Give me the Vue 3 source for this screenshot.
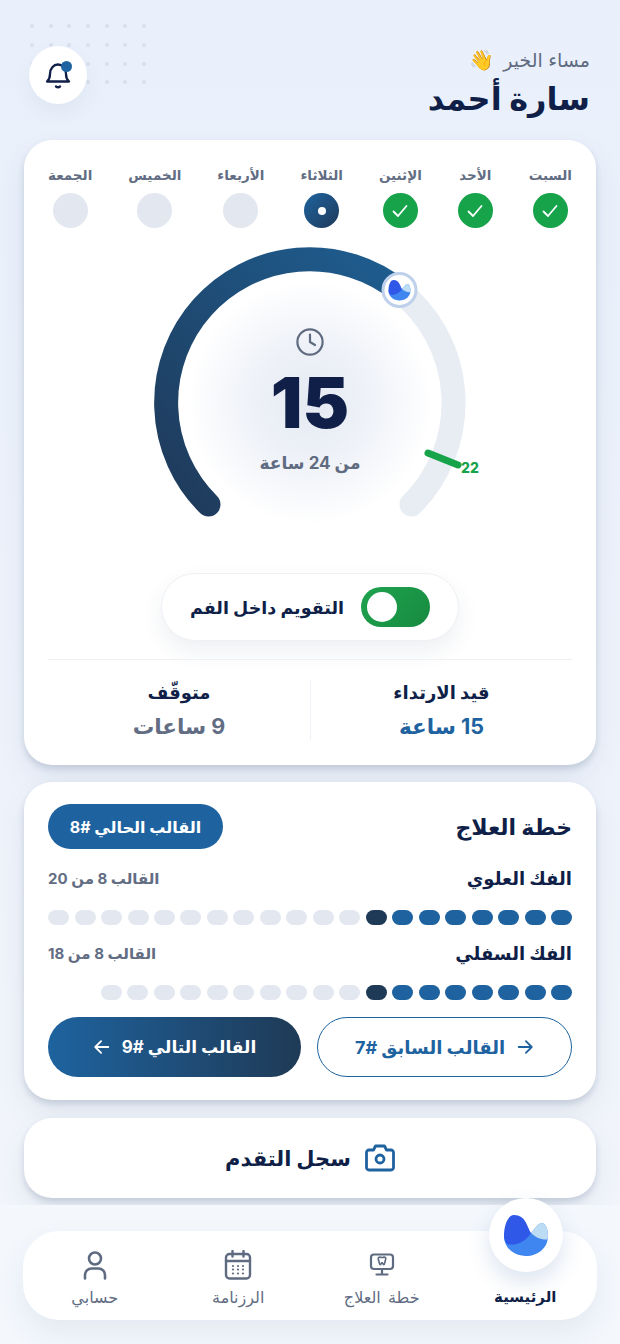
<script setup>
// Home screen of the aligner tracker
const days = [
  { name: 'السبت', state: 'done' },
  { name: 'الأحد', state: 'done' },
  { name: 'الإثنين', state: 'done' },
  { name: 'الثلاثاء', state: 'today' },
  { name: 'الأربعاء', state: 'todo' },
  { name: 'الخميس', state: 'todo' },
  { name: 'الجمعة', state: 'todo' },
]

const jaws = [
  { name: 'الفك العلوي', info: 'القالب 8 من 20', total: 20 },
  { name: 'الفك السفلي', info: 'القالب 8 من 18', total: 18 },
]

const dots = Array.from({ length: 28 })

function segClass(i) {
  if (i < 7) return 'seg done'
  if (i === 7) return 'seg current'
  return 'seg'
}

const logoPaths = [
  { d: 'M0 21C0 33 10 41 22 41C34 41 44 33 44 21C44 13 41 8 38 8C34 8 31 14 27 18L0 21Z', fill: '#3f86f0' },
  { d: 'M27 18C23 12 22 0 10 0C4 0 0 10 0 21C0 24 1.500 27 3 29C10 31 21 28 27 18Z', fill: '#2f57e8' },
  { d: 'M27 18C31 14 34 8 38 8C41 8 44 13 44 21C44 22.500 43.800 23.500 43.500 24.500C37 25 31 22 27 18Z', fill: '#bcdcf3' },
]
</script>

<template>
  <div class="page" dir="rtl">
    <div class="dots">
      <i v-for="(d, i) in dots" :key="i"></i>
    </div>

    <header class="head">
      <div class="hello">
        <div class="greet">مساء الخير<span class="wave">👋</span></div>
        <h1>سارة أحمد</h1>
      </div>
      <button class="bell">
        <svg width="26" height="28" viewBox="0 0 26 28" fill="none" stroke="#0f1f47" stroke-width="2.300" stroke-linecap="round" stroke-linejoin="round">
          <path d="M2 20.500c2-1.800 3-4 3-7.500 0-5.500 3.500-9.500 8-9.500s8 4 8 9.500c0 3.500 1 5.700 3 7.500z" />
          <path d="M11 25.500c1.300 1 2.700 1 4 0" />
        </svg>
        <span class="bell-dot"></span>
      </button>
    </header>

    <section class="card main">
      <div class="week">
        <div v-for="d in days" :key="d.name" class="day">
          <span class="day-name">{{ d.name }}</span>
          <span class="day-mark" :class="d.state">
            <svg v-if="d.state === 'done'" width="18" height="18" viewBox="0 0 18 18" fill="none" stroke="#fff" stroke-width="1.800" stroke-linecap="round" stroke-linejoin="round">
              <path d="M2.500 9.500l4.500 4.500 8.500-10" />
            </svg>
            <span v-if="d.state === 'today'" class="today-dot"></span>
          </span>
        </div>
      </div>

      <div class="gauge">
        <svg width="340" height="300" viewBox="0 0 340 300" fill="none">
          <defs>
            <radialGradient id="glow">
              <stop offset="0" stop-color="#e4e9f2" />
              <stop offset=".5" stop-color="#eff2f8" />
              <stop offset="1" stop-color="#fff" />
            </radialGradient>
            <linearGradient id="arc" gradientUnits="userSpaceOnUse" x1="30" y1="265" x2="260" y2="40">
              <stop offset="0" stop-color="#1f3a5a" />
              <stop offset="1" stop-color="#1e5c8e" />
            </linearGradient>
          </defs>
          <circle cx="170" cy="163" r="122" fill="url(#glow)" />
          <path d="M259.100 50.500A143.500 143.500 0 0 1 271.500 264.500" stroke="#e8ecf3" stroke-width="24" stroke-linecap="round" />
          <path d="M68.500 264.500A143.500 143.500 0 0 1 259.100 50.500" stroke="url(#arc)" stroke-width="24" stroke-linecap="round" />
          <path d="M288 213L318 225" stroke="#16a34a" stroke-width="7" stroke-linecap="round" />
          <text x="330" y="233" text-anchor="middle" class="tick">22</text>
          <circle cx="259.500" cy="50" r="16.500" fill="#fff" stroke="#bfd0ea" stroke-width="3" />
          <g transform="translate(248.500 40) scale(.5)">
            <path v-for="p in logoPaths" :key="p.fill" :d="p.d" :fill="p.fill" />
          </g>
        </svg>
        <div class="gauge-text">
          <svg width="30" height="30" viewBox="0 0 30 30" fill="none" stroke="#5f6b80" stroke-width="2.200" stroke-linecap="round" stroke-linejoin="round">
            <circle cx="15" cy="15" r="12.600" />
            <path d="M15 7.500V15l5 3" />
          </svg>
          <div class="hours">15</div>
          <div class="of">من 24 ساعة</div>
        </div>
      </div>

      <div class="toggle-pill">
        <span class="toggle"><span class="knob"></span></span>
        <span class="toggle-label">التقويم داخل الفم</span>
      </div>

      <div class="stats">
        <div class="stat">
          <div class="stat-label">قيد الارتداء</div>
          <div class="stat-value on">15 ساعة</div>
        </div>
        <div class="stat">
          <div class="stat-label">متوقّف</div>
          <div class="stat-value">9 ساعات</div>
        </div>
      </div>
    </section>

    <section class="card plan">
      <div class="plan-head">
        <h2>خطة العلاج</h2>
        <span class="badge">القالب الحالي #8</span>
      </div>

      <div v-for="j in jaws" :key="j.name" class="jaw">
        <div class="jaw-head">
          <span class="jaw-name">{{ j.name }}</span>
          <span class="jaw-info">{{ j.info }}</span>
        </div>
        <div class="segs">
          <span v-for="i in j.total" :key="i" :class="segClass(i - 1)"></span>
        </div>
      </div>

      <div class="actions">
        <button class="btn ghost">
          <svg width="18" height="18" viewBox="0 0 20 20" fill="none" stroke="currentColor" stroke-width="2" stroke-linecap="round" stroke-linejoin="round">
            <path d="M3 10h14M11 3.500l6.500 6.500-6.500 6.500" />
          </svg>
          <span>القالب السابق #7</span>
        </button>
        <button class="btn solid">
          <span>القالب التالي #9</span>
          <svg width="18" height="18" viewBox="0 0 20 20" fill="none" stroke="currentColor" stroke-width="2" stroke-linecap="round" stroke-linejoin="round">
            <path d="M17 10H3M9 3.500L2.500 10 9 16.500" />
          </svg>
        </button>
      </div>
    </section>

    <section class="card log">
      <svg width="30" height="28" viewBox="0 0 30 28" fill="none" stroke="#1e639f" stroke-width="2.800" stroke-linecap="round" stroke-linejoin="round">
        <path d="M4 6h4.500l2-4h9l2 4H26a2.500 2.500 0 0 1 2.500 2.500v15A2.500 2.500 0 0 1 26 26H4a2.500 2.500 0 0 1-2.500-2.500v-15A2.500 2.500 0 0 1 4 6z" />
        <circle cx="15" cy="15" r="4" />
      </svg>
      <span>سجل التقدم</span>
    </section>

    <footer class="foot">
      <nav class="nav">
        <a class="tab active">
          <span class="home-logo">
            <svg width="44" height="41" viewBox="0 0 44 41">
              <path v-for="p in logoPaths" :key="p.fill" :d="p.d" :fill="p.fill" />
            </svg>
          </span>
          <span class="tab-label">الرئيسية</span>
        </a>
        <a class="tab">
          <svg class="screen" width="26" height="23" viewBox="0 0 26 23" fill="none" stroke="#5f6b80" stroke-width="2.200" stroke-linecap="round" stroke-linejoin="round">
            <rect x="2" y="1.500" width="22" height="14.500" rx="3" />
            <path d="M13 16v5M7.500 21.500h11" />
            <path d="M9.500 4.500c1.300-.7 2.500 0 3.500 0s2.200-.7 3.500 0c.7 1.300 0 3-.5 4.200-.3 1-.4 3-1.300 3s-.9-2.200-1.700-2.200-.8 2.200-1.700 2.200-1-2-1.300-3c-.5-1.200-1.200-2.900-.5-4.200z" stroke-width="1.700" />
          </svg>
          <span class="tab-label">خطة العلاج</span>
        </a>
        <a class="tab">
          <svg width="28" height="30" viewBox="0 0 28 30" fill="none" stroke="#5f6b80" stroke-width="2.400" stroke-linecap="round" stroke-linejoin="round">
            <rect x="2" y="4" width="24" height="24.500" rx="3.500" />
            <path d="M2 11h24M8.500 1v5.500M19.500 1v5.500" />
            <g fill="#5f6b80" stroke="none">
              <circle cx="9" cy="16" r="1.100" /><circle cx="14" cy="16" r="1.100" /><circle cx="19" cy="16" r="1.100" />
              <circle cx="9" cy="19.500" r="1.100" /><circle cx="14" cy="19.500" r="1.100" /><circle cx="19" cy="19.500" r="1.100" />
              <circle cx="9" cy="23.500" r="1.100" /><circle cx="14" cy="23.500" r="1.100" /><circle cx="19" cy="23.500" r="1.100" />
            </g>
          </svg>
          <span class="tab-label">الرزنامة</span>
        </a>
        <a class="tab">
          <svg width="24" height="29" viewBox="0 0 24 29" fill="none" stroke="#5f6b80" stroke-width="2.600" stroke-linecap="round" stroke-linejoin="round">
            <circle cx="12" cy="7.500" r="6" />
            <path d="M2 27.500v-3.500a6.500 6.500 0 0 1 6.500-6.500h7a6.500 6.500 0 0 1 6.500 6.500v3.500" />
          </svg>
          <span class="tab-label">حسابي</span>
        </a>
      </nav>
    </footer>
  </div>
</template>

<style>
html, body { margin: 0; background: #f4f8fd; }
</style>

<style scoped>
.page {
  position: relative;
  width: 620px;
  height: 1344px;
  overflow: hidden;
  background: linear-gradient(180deg, #e9f0fb 0%, #eef3fb 60%, #f3f6fb 100%);
  font-family: "Inter", "DejaVu Sans", sans-serif;
  color: #0f1f47;
}

.dots {
  position: absolute;
  left: 30px;
  top: 24px;
  display: grid;
  grid-template-columns: repeat(7, 5px);
  grid-auto-rows: 5px;
  column-gap: 13.700px;
  row-gap: 13.800px;
  direction: ltr;
}
.dots i {
  display: block;
  width: 4px;
  height: 4px;
  border-radius: 50%;
  background: #d8e0ec;
}

.head {
  position: relative;
  height: 140px;
  padding: 0 30px 0 29px;
  display: flex;
  justify-content: space-between;
  box-sizing: border-box;
}
.hello { padding-top: 47px; }
.greet { font-size: 19px; line-height: 26px; color: #5f6b80; }
.wave { margin-right: 9px; font-size: 20px; }
h1 { margin: 4px 0 0; font-size: 32px; line-height: 42px; font-weight: 700; }
.bell {
  position: relative;
  margin-top: 46px;
  width: 58px;
  height: 58px;
  padding: 0;
  border: 0;
  border-radius: 50%;
  background: #fff;
  box-shadow: 0 8px 20px rgba(40, 60, 100, 0.06);
  display: flex;
  align-items: center;
  justify-content: center;
}
.bell-dot {
  position: absolute;
  left: 32px;
  top: 15px;
  width: 11px;
  height: 11px;
  border-radius: 50%;
  background: #1e639f;
}

.card {
  position: relative;
  margin: 0 24px;
  background: #fff;
  border-radius: 28px;
  box-shadow: 0 4px 6px rgba(40, 60, 100, 0.16), 0 14px 30px rgba(40, 60, 100, 0.08);
}

.main { height: 625px; padding: 26px 24px 0; box-sizing: border-box; }
.week { display: flex; justify-content: space-between; }
.day { display: flex; flex-direction: column; align-items: center; gap: 9px; }
.day-name { font-size: 13.500px; line-height: 18px; font-weight: 700; color: #626d83; white-space: nowrap; }
.day-mark {
  width: 35px;
  height: 35px;
  border-radius: 50%;
  background: #e3e7ef;
  display: flex;
  align-items: center;
  justify-content: center;
}
.day-mark.done { background: #16a34a; }
.day-mark.today { background: linear-gradient(135deg, #1e639f, #1f3a5a); }
.today-dot { width: 8px; height: 8px; border-radius: 50%; background: #fff; }

.gauge { position: relative; width: 340px; height: 300px; margin: 12px auto 0; }
.gauge > svg { display: block; }
.tick { font-size: 14px; font-weight: 800; fill: #16a34a; }
.gauge-text {
  position: absolute;
  top: 87px;
  left: 0;
  right: 0;
  display: flex;
  flex-direction: column;
  align-items: center;
}
.hours { margin-top: 6px; font-size: 70px; line-height: 80px; font-weight: 900; }
.of { margin-top: 8px; font-size: 17px; line-height: 24px; font-weight: 700; color: #5f6b80; }

.toggle-pill {
  width: 298px;
  height: 68px;
  margin: 33px auto 0;
  box-sizing: border-box;
  padding: 0 28px;
  border: 1px solid #eef0f4;
  border-radius: 34px;
  background: #fff;
  box-shadow: 0 10px 22px rgba(40, 60, 100, 0.08);
  display: flex;
  align-items: center;
  justify-content: space-between;
}
.toggle-label { font-size: 17.500px; font-weight: 700; }
.toggle {
  position: relative;
  width: 69px;
  height: 40px;
  border-radius: 20px;
  background: linear-gradient(135deg, #1ea34f, #178a3f);
}
.knob {
  position: absolute;
  left: 6px;
  top: 5px;
  width: 30px;
  height: 30px;
  border-radius: 50%;
  background: #fff;
}

.stats {
  margin-top: 18px;
  border-top: 1px solid #eef1f5;
  padding-top: 20px;
  display: grid;
  grid-template-columns: 1fr 1fr;
}
.stat { height: 60px; text-align: center; }
.stat:first-child { border-left: 1px solid #eef1f5; }
.stat-label { font-size: 18px; line-height: 26px; font-weight: 700; }
.stat-value { margin-top: 6px; font-size: 21.500px; line-height: 28px; font-weight: 700; color: #626d83; }
.stat-value.on { color: #1e639f; }

.plan { height: 318px; margin-top: 17px; padding: 22px 24px 0; box-sizing: border-box; }
.plan-head { display: flex; justify-content: space-between; align-items: center; }
h2 { margin: 0; font-size: 22px; font-weight: 700; }
.badge {
  width: 175px;
  height: 45px;
  border-radius: 23px;
  background: #1e639f;
  color: #fff;
  font-size: 16px;
  font-weight: 700;
  display: flex;
  align-items: center;
  justify-content: center;
}
.jaw { margin-top: 14px; }
.jaw + .jaw { margin-top: 13px; }
.jaw-head { display: flex; justify-content: space-between; align-items: center; height: 30px; }
.jaw-name { font-size: 18px; font-weight: 700; }
.jaw-info { font-size: 15px; font-weight: 700; color: #626d83; }
.segs { display: flex; gap: 5.500px; margin-top: 17px; }
.seg { width: 21px; height: 15px; border-radius: 8px; background: #e3e7ef; }
.seg.done { background: #1e639f; }
.seg.current { background: #1f3a56; }

.actions { display: grid; grid-template-columns: 255px 253px; justify-content: space-between; margin-top: 17px; }
.btn {
  height: 60px;
  border-radius: 30px;
  font: inherit;
  font-size: 17px;
  font-weight: 700;
  display: flex;
  align-items: center;
  justify-content: center;
  gap: 11px;
}
.ghost { border: 1.500px solid #1e639f; background: #fff; color: #1e639f; font-size: 18px; }
.solid { border: 0; background: linear-gradient(270deg, #1f3a56, #1e639f); color: #fff; }

.log {
  height: 80px;
  margin-top: 18px;
  display: flex;
  align-items: center;
  justify-content: center;
  gap: 14px;
  font-size: 21px;
  font-weight: 700;
}

.foot {
  position: absolute;
  left: 0;
  right: 0;
  top: 1205px;
  bottom: 0;
  background: #f4f8fd;
}
.nav {
  position: absolute;
  left: 23px;
  right: 23px;
  top: 26px;
  height: 89px;
  display: grid;
  grid-template-columns: repeat(4, 1fr);
  background: #fff;
  border-radius: 36px;
  box-shadow: 0 14px 30px rgba(40, 60, 100, 0.08);
}
.tab { position: relative; display: flex; flex-direction: column; align-items: center; justify-content: flex-end; padding-bottom: 13px; }
.tab svg { margin-bottom: 7px; }
.tab svg.screen { margin-bottom: 11px; }
.tab-label { font-size: 16px; line-height: 20px; font-weight: 500; word-spacing: 3px; color: #626d83; white-space: nowrap; }
.active .tab-label { font-size: 15px; font-weight: 700; color: #0f1f47; }
.home-logo {
  position: absolute;
  top: -33px;
  left: 35px;
  width: 74px;
  height: 74px;
  border-radius: 50%;
  background: #fff;
  box-shadow: 0 10px 22px rgba(40, 90, 160, 0.16);
  display: flex;
  align-items: center;
  justify-content: center;
}
.home-logo svg { margin: 0; }
</style>
